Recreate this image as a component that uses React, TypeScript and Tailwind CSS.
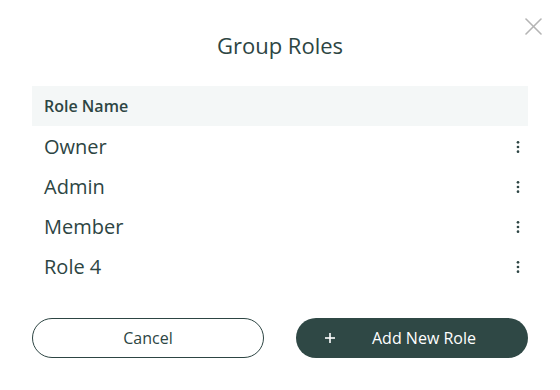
import React from "react";

const roles = ["Owner", "Admin", "Member", "Role 4"];

function Dots() {
  return (
    <svg width="4" height="14" viewBox="0 0 4 14" fill="#2d4543">
      <circle cx="2" cy="2.3" r="1.35" />
      <circle cx="2" cy="7" r="1.35" />
      <circle cx="2" cy="11.7" r="1.35" />
    </svg>
  );
}

export default function App() {
  return (
    <div className="relative w-[560px] h-[390px] bg-white font-['Open_Sans',sans-serif] text-[#2d4543]">
      <button className="absolute top-[18px] left-[525px] w-[17px] h-[17px]">
        <svg width="17" height="17" viewBox="0 0 17 17" stroke="#b4b4b4" strokeWidth="1.6" strokeLinecap="round">
          <line x1="1" y1="1" x2="16" y2="16" />
          <line x1="16" y1="1" x2="1" y2="16" />
        </svg>
      </button>
      <h2 className="pt-[30px] text-center text-[22px] leading-[30px]">Group Roles</h2>
      <div className="mx-8 mt-[26px]">
        <div className="h-10 px-3 flex items-center bg-[#f4f7f7] text-[16px] font-semibold">Role Name</div>
        {roles.map((r) => (
          <div key={r} className="h-10 pl-3 pr-[8px] flex items-center justify-between text-[20px] pt-[2px]">
            <span>{r}</span>
            <Dots />
          </div>
        ))}
        <div className="mt-8 flex gap-8">
          <button className="w-[232px] h-10 rounded-full border border-[#2d4543] text-[16px] flex items-center justify-center">
            Cancel
          </button>
          <button className="w-[232px] h-10 rounded-full bg-[#2f4845] text-white text-[16px] flex items-center pl-[29px]">
            <svg width="10" height="10" viewBox="0 0 10 10" stroke="white" strokeWidth="1.6">
              <line x1="5" y1="0" x2="5" y2="10" />
              <line x1="0" y1="5" x2="10" y2="5" />
            </svg>
            <span className="ml-[37px]">Add New Role</span>
          </button>
        </div>
      </div>
    </div>
  );
}
